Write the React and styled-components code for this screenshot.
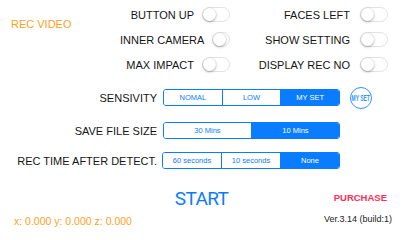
import React from "react";
import styled, { createGlobalStyle } from "styled-components";

const BLUE = "#0a7cff";
const ORANGE = "#ff9f1c";

const GlobalStyle = createGlobalStyle`
  html, body { margin: 0; padding: 0; background: #fff; }
  body { font-family: "Liberation Sans", Arial, sans-serif; color: #151515; }
`;

const Page = styled.div`
  width: 405px;
  height: 228px;
  overflow: hidden;
  display: flex;
  flex-direction: column;
  background: #fff;
`;

const TopSection = styled.div`
  display: flex;
  padding-top: 2px;
  height: 75px;
`;

const Title = styled.div`
  width: 120px;
  box-sizing: border-box;
  padding-left: 11px;
  padding-top: 16px;
  font-size: 11px;
  line-height: 13px;
  color: ${ORANGE};
`;

const SwitchGroup = styled.div`
  width: ${(p) => p.$w}px;
  display: flex;
  flex-direction: column;
`;

const SwitchRow = styled.div`
  height: 25px;
  display: flex;
  align-items: center;
  justify-content: flex-end;
  gap: ${(p) => p.$gap}px;
  font-size: 11px;
  white-space: nowrap;
`;

const Track = styled.div`
  width: 28px;
  height: 15px;
  box-sizing: border-box;
  border: 1px solid #e2e2e2;
  border-radius: 8px;
  background: #fff;
  display: flex;
  align-items: center;
`;

const Knob = styled.div`
  width: 13px;
  height: 13px;
  border-radius: 50%;
  background: #fff;
  box-shadow: 0 1px 2.5px rgba(0, 0, 0, 0.32), 0 0 0 0.5px rgba(0, 0, 0, 0.06);
`;

const SettingsRow = styled.div`
  display: flex;
  align-items: center;
  height: 17px;
  margin-top: ${(p) => p.$mt}px;
`;

const RowLabel = styled.div`
  width: 157px;
  flex-shrink: 0;
  text-align: right;
  font-size: 11px;
  white-space: nowrap;
  margin-right: ${(p) => p.$gap}px;
`;

const Segmented = styled.div`
  display: flex;
  width: ${(p) => p.$w}px;
  height: 17px;
  box-sizing: border-box;
  border: 1px solid ${BLUE};
  border-radius: 3px;
  overflow: hidden;
`;

const Segment = styled.div`
  flex: 1;
  display: flex;
  align-items: center;
  justify-content: center;
  font-size: 7.5px;
  background: ${(p) => (p.$active ? BLUE : "#fff")};
  color: ${(p) => (p.$active ? "#fff" : BLUE)};
  & + & {
    border-left: 1px solid ${BLUE};
  }
`;

const MySet = styled.div`
  margin-left: 9.5px;
  width: 22px;
  height: 22px;
  box-sizing: border-box;
  border-radius: 50%;
  border: 1.3px solid #2f93ff;
  display: flex;
  align-items: center;
  justify-content: center;
  color: #2f93ff;
  overflow: hidden;
`;

const MySetText = styled.span`
  font-size: 8.5px;
  font-weight: bold;
  white-space: nowrap;
  transform: scaleX(0.58);
`;

const StartRow = styled.div`
  display: grid;
  grid-template-columns: 1fr auto 1fr;
  align-items: center;
  margin-top: 19px;
  height: 22px;
`;

const Start = styled.div`
  grid-column: 2;
  font-family: Roboto, "Liberation Sans", sans-serif;
  font-size: 19px;
  letter-spacing: -0.6px;
  line-height: 22px;
  color: ${BLUE};
  margin-right: 2px;
`;

const Purchase = styled.div`
  grid-column: 3;
  justify-self: end;
  margin-right: 18px;
  margin-bottom: 4px;
  font-size: 9.5px;
  font-weight: bold;
  color: #ff2d55;
`;

const Footer = styled.div`
  display: flex;
  justify-content: space-between;
  align-items: center;
  height: 18px;
  margin-top: 1px;
  padding: 0 13px 0 14px;
`;

const Coords = styled.div`
  font-size: 10.5px;
  color: ${ORANGE};
  margin-top: 2px;
`;

const Version = styled.div`
  font-size: 9px;
  color: #222;
  margin-bottom: 1px;
`;

const Toggle = ({ label, gap }) => (
  <SwitchRow $gap={gap}>
    <span>{label}</span>
    <Track>
      <Knob />
    </Track>
  </SwitchRow>
);

const SegRow = ({ label, mt, gap, w, options, active, children }) => (
  <SettingsRow $mt={mt}>
    <RowLabel $gap={gap}>{label}</RowLabel>
    <Segmented $w={w}>
      {options.map((o, i) => (
        <Segment key={o} $active={i === active}>
          {o}
        </Segment>
      ))}
    </Segmented>
    {children}
  </SettingsRow>
);

export default function App() {
  return (
    <Page>
      <GlobalStyle />
      <TopSection>
        <Title>REC VIDEO</Title>
        <SwitchGroup $w={110}>
          <Toggle label="BUTTON UP" gap={8} />
          <Toggle label="INNER CAMERA" gap={8} />
          <Toggle label="MAX IMPACT" gap={8} />
        </SwitchGroup>
        <SwitchGroup $w={158}>
          <Toggle label="FACES LEFT" gap={10} />
          <Toggle label="SHOW SETTING" gap={10} />
          <Toggle label="DISPLAY REC NO" gap={10} />
        </SwitchGroup>
      </TopSection>

      <SegRow label="SENSIVITY" mt={12} gap={6} w={177} options={["NOMAL", "LOW", "MY SET"]} active={2}>
        <MySet>
          <MySetText>MY SET</MySetText>
        </MySet>
      </SegRow>
      <SegRow label="SAVE FILE SIZE" mt={16} gap={6} w={177} options={["30 Mins", "10 Mins"]} active={1} />
      <SegRow
        label="REC TIME AFTER DETECT."
        mt={13}
        gap={5}
        w={178}
        options={["60 seconds", "10 seconds", "None"]}
        active={2}
      />

      <StartRow>
        <Start>START</Start>
        <Purchase>PURCHASE</Purchase>
      </StartRow>
      <Footer>
        <Coords>x: 0.000 y: 0.000 z: 0.000</Coords>
        <Version>Ver.3.14 (build:1)</Version>
      </Footer>
    </Page>
  );
}
